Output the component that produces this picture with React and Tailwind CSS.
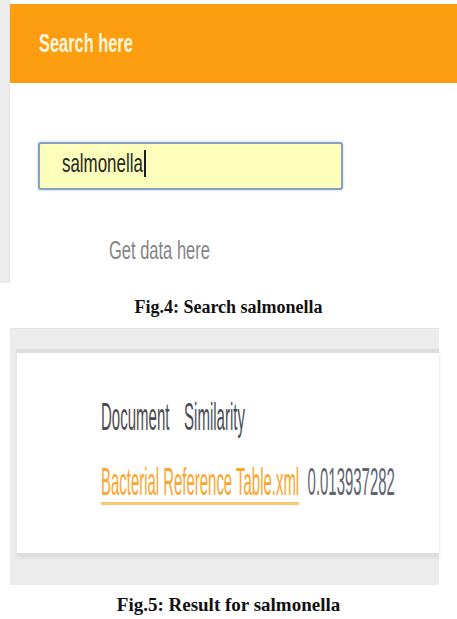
export default function App() {
  const arial = { fontFamily: '"Liberation Sans", Arial, sans-serif' };
  const times = { fontFamily: '"Liberation Serif", "Times New Roman", serif' };

  return (
    <div className="w-[457px] h-[619px] bg-white overflow-hidden relative">
      {/* Search panel */}
      <div className="flex h-[283px]">
        <div className="w-[10px] shrink-0 bg-[#ececec] border-r border-[#e2e2e2]" />
        <div className="flex-1 flex flex-col">
          <div className="h-[4px] bg-white" />
          <div className="h-[79px] bg-[#fd9d10] pt-[26px] pl-[29px]">
            <span
              style={arial}
              className="inline-block origin-left scale-x-[0.63] whitespace-nowrap text-[26px] leading-none font-bold text-[#fff6dc]"
            >
              Search here
            </span>
          </div>
          <div className="relative mt-[59px] ml-[28px] w-[305px] h-[48px] rounded-[3px] border-2 border-[#86a0c2] bg-[#fdfdbc] shadow-[0_0_3px_#b7cbe6] pt-[6px] pl-[22px] flex">
            <span
              style={arial}
              className="inline-block origin-left scale-x-[0.65] whitespace-nowrap text-[26px] leading-none text-[#262a1e]"
            >
              salmonella
            </span>
            {/* text caret */}
            <div className="absolute left-[104px] top-[6px] w-[2px] h-[27px] bg-[#1d1d1d]" />
          </div>
          <div className="mt-[48px] ml-[99px]">
            <span
              style={arial}
              className="inline-block origin-left scale-x-[0.66] whitespace-nowrap text-[25px] leading-none text-[#858585]"
            >
              Get data here
            </span>
          </div>
        </div>
      </div>

      <p style={times} className="mt-[15px] text-center text-[18px] leading-none font-bold text-[#111]">
        Fig.4: Search salmonella
      </p>

      {/* Results panel */}
      <div className="mt-[12px] ml-[10px] w-[429px] h-[257px] bg-[#ececec] border-t border-[#e4e4e4] pt-[20px] pl-[6px]">
        <div className="h-[204px] bg-white border-t-[4px] border-[#dddddd] border-l border-l-[#e6e6e6] shadow-[0_5px_3px_#dcdcdc] overflow-hidden pl-[84px] pt-[44px]">
          <div className="h-[65px]">
            <span
              style={arial}
              className="inline-block origin-left scale-x-[0.385] whitespace-nowrap text-[39px] leading-none text-[#4a4d55]"
            >
              Document<span className="ml-[38px]">Similarity</span>
            </span>
          </div>
          <div>
            <span
              style={arial}
              className="inline-block origin-left scale-x-[0.383] whitespace-nowrap text-[39px] leading-none"
            >
              <span className="text-[#fba531] underline decoration-[3px] underline-offset-[7px] decoration-[#fdc66f]">
                Bacterial Reference Table.xml
              </span>
              <span className="ml-[22px] text-[#5f6571] inline-block">0.013937282</span>
            </span>
          </div>
        </div>
      </div>

      <p style={times} className="mt-[10px] text-center text-[19px] leading-none font-bold text-[#111]">
        Fig.5: Result for salmonella
      </p>
    </div>
  );
}
